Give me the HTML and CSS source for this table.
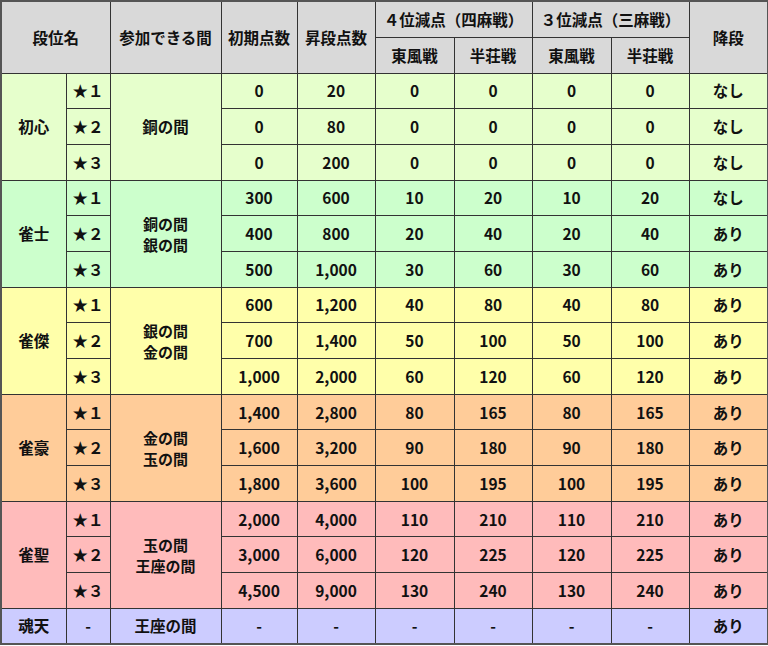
FILE: index.html
```html
<!DOCTYPE html>
<html lang="ja">
<head>
<meta charset="utf-8">
<link rel="stylesheet" href="styles.css">
</head>
<body>
<table class="rank">
<colgroup>
<col class="c-name"><col class="c-star"><col class="c-room"><col class="c-pt"><col class="c-pt2"><col class="c-pt3"><col class="c-pt2"><col class="c-pt3"><col class="c-pt2"><col class="c-pt3">
</colgroup>
<thead>
<tr class="h1"><th colspan="2" rowspan="2">段位名</th><th rowspan="2">参加できる間</th><th rowspan="2">初期点数</th><th rowspan="2">昇段点数</th><th colspan="2">４位減点（四麻戦）</th><th colspan="2">３位減点（三麻戦）</th><th rowspan="2">降段</th></tr>
<tr class="h2"><th>東風戦</th><th>半荘戦</th><th>東風戦</th><th>半荘戦</th></tr>
</thead>
<tbody class="g1">
<tr><td rowspan="3">初心</td><td>★１</td><td rowspan="3">銅の間</td><td>0</td><td>20</td><td>0</td><td>0</td><td>0</td><td>0</td><td>なし</td></tr>
<tr><td>★２</td><td>0</td><td>80</td><td>0</td><td>0</td><td>0</td><td>0</td><td>なし</td></tr>
<tr><td>★３</td><td>0</td><td>200</td><td>0</td><td>0</td><td>0</td><td>0</td><td>なし</td></tr>
</tbody>
<tbody class="g2">
<tr><td rowspan="3">雀士</td><td>★１</td><td rowspan="3" class="two">銅の間<br>銀の間</td><td>300</td><td>600</td><td>10</td><td>20</td><td>10</td><td>20</td><td>なし</td></tr>
<tr><td>★２</td><td>400</td><td>800</td><td>20</td><td>40</td><td>20</td><td>40</td><td>あり</td></tr>
<tr><td>★３</td><td>500</td><td>1,000</td><td>30</td><td>60</td><td>30</td><td>60</td><td>あり</td></tr>
</tbody>
<tbody class="g3">
<tr><td rowspan="3">雀傑</td><td>★１</td><td rowspan="3" class="two">銀の間<br>金の間</td><td>600</td><td>1,200</td><td>40</td><td>80</td><td>40</td><td>80</td><td>あり</td></tr>
<tr><td>★２</td><td>700</td><td>1,400</td><td>50</td><td>100</td><td>50</td><td>100</td><td>あり</td></tr>
<tr><td>★３</td><td>1,000</td><td>2,000</td><td>60</td><td>120</td><td>60</td><td>120</td><td>あり</td></tr>
</tbody>
<tbody class="g4">
<tr><td rowspan="3">雀豪</td><td>★１</td><td rowspan="3" class="two">金の間<br>玉の間</td><td>1,400</td><td>2,800</td><td>80</td><td>165</td><td>80</td><td>165</td><td>あり</td></tr>
<tr><td>★２</td><td>1,600</td><td>3,200</td><td>90</td><td>180</td><td>90</td><td>180</td><td>あり</td></tr>
<tr><td>★３</td><td>1,800</td><td>3,600</td><td>100</td><td>195</td><td>100</td><td>195</td><td>あり</td></tr>
</tbody>
<tbody class="g5">
<tr><td rowspan="3">雀聖</td><td>★１</td><td rowspan="3" class="two">玉の間<br>王座の間</td><td>2,000</td><td>4,000</td><td>110</td><td>210</td><td>110</td><td>210</td><td>あり</td></tr>
<tr><td>★２</td><td>3,000</td><td>6,000</td><td>120</td><td>225</td><td>120</td><td>225</td><td>あり</td></tr>
<tr><td>★３</td><td>4,500</td><td>9,000</td><td>130</td><td>240</td><td>130</td><td>240</td><td>あり</td></tr>
</tbody>
<tbody class="g6">
<tr><td>魂天</td><td>-</td><td>王座の間</td><td>-</td><td>-</td><td>-</td><td>-</td><td>-</td><td>-</td><td>あり</td></tr>
</tbody>
</table>
</body>
</html>
```
FILE: styles.css
```css
html, body {
  margin: 0;
  padding: 0;
  background: #ffffff;
}
.rank {
  border-collapse: collapse;
  table-layout: fixed;
  width: 767px;
  font-family: "Noto Sans CJK JP", "Noto Sans", sans-serif;
  font-size: 15.5px;
  font-weight: 700;
  color: #111;
  line-height: 19px;
  border: 2px solid #555;
}
.c-name { width: 65px; }
.c-star { width: 44px; }
.c-room { width: 111px; }
.c-pt { width: 76px; }
.c-pt2 { width: 78px; }
.c-pt3 { width: 79px; }
.rank th, .rank td {
  border: 1px solid #333;
  text-align: center;
  vertical-align: middle;
  padding: 0;
  white-space: nowrap;
  box-sizing: border-box;
}
.rank th {
  background: #d9d9d9;
  font-weight: 700;
}
.h1 th, .h2 th { height: 36px; }
.rank td { height: 35.7px; }
.rank td.two { line-height: 21px; font-size: 15px; }
.g1 td { background: #e6ffcc; }
.g2 td { background: #ccffcc; }
.g3 td { background: #ffffaa; }
.g4 td { background: #ffcc99; }
.g5 td { background: #ffbbbb; }
.g6 td { background: #ccccff; }
```
